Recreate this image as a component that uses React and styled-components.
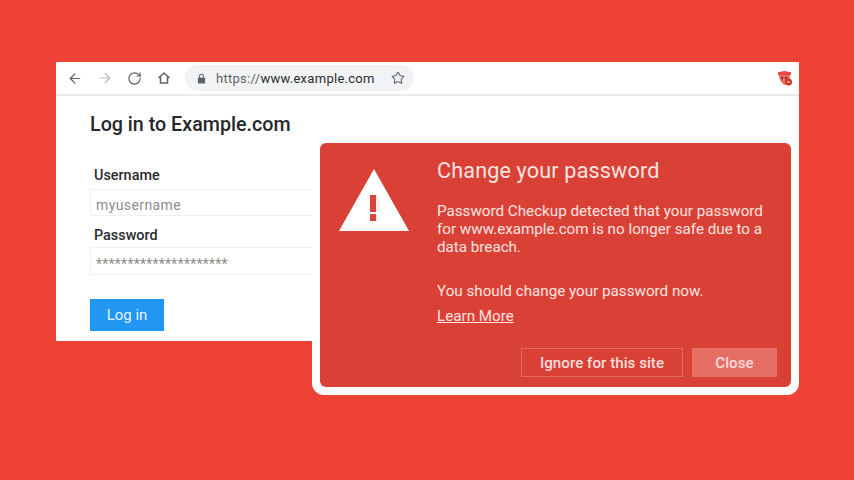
import styled, { createGlobalStyle } from "styled-components";
import { ArrowLeft, ArrowRight, RotateCw, Star } from "lucide-react";

const GlobalStyle = createGlobalStyle`
  html, body {
    margin: 0;
    padding: 0;
    background: #ee4237;
    font-family: "Roboto", "Liberation Sans", sans-serif;
  }
`;

const Page = styled.div`
  width: 854px;
  height: 480px;
  overflow: hidden;
  box-sizing: border-box;
  padding: 62px 55px 0 56px;
  background: #ee4237;
`;

const Stage = styled.div`
  position: relative;
`;

const Browser = styled.div`
  height: 279px;
  background: #fff;
  display: flex;
  flex-direction: column;
`;

const Toolbar = styled.div`
  height: 32px;
  flex-shrink: 0;
  display: flex;
  align-items: center;
  padding: 0 6px 0 11px;
  border-bottom: 2px solid #e8eaed;
`;

const NavButton = styled.span`
  display: flex;
  width: 16px;
  justify-content: center;
  margin-right: ${(p) => p.$gap}px;
  color: ${(p) => p.$color || "#5f6368"};
`;

const AddressBar = styled.div`
  width: 229px;
  height: 26px;
  margin-left: 5px;
  border-radius: 13px;
  background: #f1f3f4;
  display: flex;
  align-items: center;
  box-sizing: border-box;
  padding: 0 9px 0 12px;
  font-size: 13px;
  letter-spacing: 0.28px;
`;

const Scheme = styled.span`
  color: #5f6368;
  margin-left: 10px;
`;

const Host = styled.span`
  color: #2b2d30;
`;

const StarButton = styled.span`
  display: flex;
  margin-left: auto;
  color: #5f6368;
`;

const Extension = styled.span`
  display: flex;
  margin-left: auto;
`;

const LoginForm = styled.div`
  padding: 17px 34px 0;
  display: flex;
  flex-direction: column;
  align-items: flex-start;
`;

const Heading = styled.h1`
  margin: 0 0 31px;
  font-size: 19.7px;
  line-height: 24px;
  font-weight: 500;
  color: #25272a;
`;

const Label = styled.div`
  font-size: 14.4px;
  line-height: 16px;
  font-weight: 500;
  color: #2a2b2e;
  padding-left: 4px;
  margin-bottom: ${(p) => p.$gap}px;
`;

const Field = styled.div`
  width: 250px;
  height: ${(p) => p.$height}px;
  box-sizing: border-box;
  margin-bottom: ${(p) => p.$gap}px;
  padding: 5px 5px 0;
  display: flex;
  align-items: center;
  border: 1px solid #eef0f2;
  font-size: 14px;
  letter-spacing: ${(p) => p.$spacing}px;
  color: #8d8d8d;
`;

const LoginButton = styled.button`
  width: 74px;
  height: 32px;
  border: 0;
  padding: 0;
  background: #2196f3;
  color: #e6f3fe;
  font-family: inherit;
  font-size: 15px;
`;

const DialogFrame = styled.div`
  position: absolute;
  left: 256px;
  top: 73px;
  width: 487px;
  height: 260px;
  box-sizing: border-box;
  padding: 8px;
  background: #fff;
  border-radius: 12px;
`;

const Dialog = styled.div`
  height: 100%;
  box-sizing: border-box;
  padding: 14px 15px 10px 19px;
  background: #da4136;
  border-radius: 6px;
  display: flex;
  gap: 28px;
  color: #fbe4e1;
`;

const WarningIcon = styled.svg`
  flex-shrink: 0;
  margin-top: 12px;
`;

const DialogBody = styled.div`
  flex: 1;
  display: flex;
  flex-direction: column;
`;

const DialogTitle = styled.h2`
  margin: 0 0 17px;
  font-size: 21.5px;
  line-height: 28px;
  font-weight: 400;
  letter-spacing: 0.2px;
`;

const Message = styled.p`
  margin: 0 0 ${(p) => p.$gap}px;
  font-size: 15.2px;
  line-height: 18px;
  width: 340px;
`;

const LearnMore = styled.a`
  align-self: flex-start;
  font-size: 15.2px;
  line-height: 18px;
  text-decoration: underline;
  color: inherit;
`;

const Actions = styled.div`
  margin-top: auto;
  display: flex;
  justify-content: flex-end;
  gap: 9px;
`;

const DialogButton = styled.button`
  width: ${(p) => p.$width}px;
  height: 29px;
  padding: 0;
  font-family: inherit;
  font-size: 15.2px;
  font-weight: 500;
  color: #fbdedb;
  border: 1px solid ${(p) => (p.$filled ? "#e66e64" : "#e9695f")};
  background: ${(p) => (p.$filled ? "#e66e64" : "transparent")};
`;

function HomeIcon() {
  return (
    <svg width="14" height="14" viewBox="0 0 14 14" fill="none" stroke="#5f6368" strokeWidth="1.5">
      <path d="M1.5 7 7 2l5.5 5M3.5 6v6h7V6" strokeLinejoin="round" />
    </svg>
  );
}

function LockIcon() {
  return (
    <svg width="9" height="11" viewBox="0 0 10 12">
      <path d="M1 5h8v6.5H1z" fill="#5f6368" />
      <path d="M2.8 5V3.4a2.2 2.2 0 0 1 4.4 0V5" fill="none" stroke="#5f6368" strokeWidth="1.2" />
    </svg>
  );
}

function PasswordCheckupIcon() {
  return (
    <svg width="16" height="17" viewBox="0 0 16 17">
      <path d="M1 2.2 7.5 1 14 2.2V5H1z" fill="#e04a40" />
      <path d="M2 5h11c0 3-.6 6-5.500 10C3 11.500 2 8 2 5z" fill="#ea6a60" />
      <circle cx="5" cy="8" r="1.200" fill="#8f2a24" />
      <circle cx="9" cy="8" r="1.200" fill="#8f2a24" />
      <circle cx="11.500" cy="12" r="3.500" fill="#d32f26" />
      <path d="M10 12h3" stroke="#fff" strokeWidth="1" />
    </svg>
  );
}

export default function App() {
  return (
    <Page>
      <GlobalStyle />
      <Stage>
        <Browser>
          <Toolbar>
            <NavButton $gap={14}><ArrowLeft size={17} strokeWidth={1.8} /></NavButton>
            <NavButton $gap={13} $color="#b4b8bd"><ArrowRight size={16} strokeWidth={1.8} /></NavButton>
            <NavButton $gap={14}><RotateCw size={15} strokeWidth={1.9} /></NavButton>
            <NavButton $gap={8}><HomeIcon /></NavButton>
            <AddressBar>
              <LockIcon />
              <Scheme>https://</Scheme>
              <Host>www.example.com</Host>
              <StarButton><Star size={14} strokeWidth={1.8} /></StarButton>
            </AddressBar>
            <Extension><PasswordCheckupIcon /></Extension>
          </Toolbar>
          <LoginForm>
            <Heading>Log in to Example.com</Heading>
            <Label $gap={5}>Username</Label>
            <Field $height={27} $gap={12} $spacing={0.4}>myusername</Field>
            <Label $gap={3}>Password</Label>
            <Field $height={28} $gap={24} $spacing={0.25}>*********************</Field>
            <LoginButton>Log in</LoginButton>
          </LoginForm>
        </Browser>
        <DialogFrame>
          <Dialog>
            <WarningIcon width="70" height="62" viewBox="0 0 70 62">
              <path d="M35 0 70 62H0z" fill="#fff" />
              <path d="M37 26h2l3 17h-5zM37 45h2l2 7h-4z" fill="#f1f1f1" />
              <path d="M31 26h6v17h-6zM31 45h6v7h-6z" fill="#d9433a" />
            </WarningIcon>
            <DialogBody>
              <DialogTitle>Change your password</DialogTitle>
              <Message $gap={26}>
                Password Checkup detected that your password for www.example.com is no longer safe due to a data breach.
              </Message>
              <Message $gap={7}>You should change your password now.</Message>
              <LearnMore>Learn More</LearnMore>
              <Actions>
                <DialogButton $width={162}>Ignore for this site</DialogButton>
                <DialogButton $width={85} $filled>Close</DialogButton>
              </Actions>
            </DialogBody>
          </Dialog>
        </DialogFrame>
      </Stage>
    </Page>
  );
}
